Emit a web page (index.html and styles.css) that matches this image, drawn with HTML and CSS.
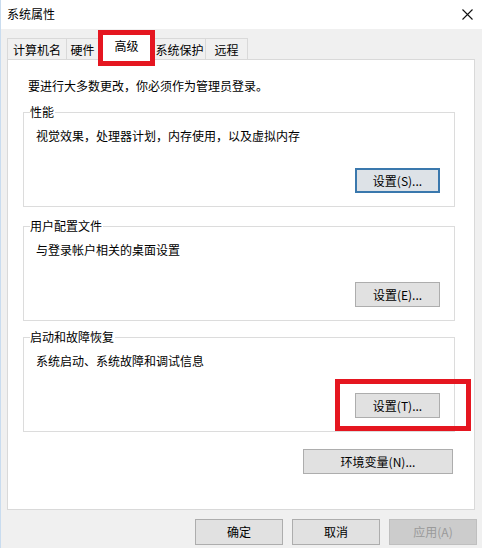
FILE: index.html
```html
<!DOCTYPE html>
<html lang="zh-CN">
<head>
<meta charset="utf-8">
<title>系统属性</title>
<link rel="stylesheet" href="styles.css">
</head>
<body>
<div class="window">
  <div class="titlebar">
    <span class="title">系统属性</span>
    <svg class="close" width="11" height="11" viewBox="0 0 11 11"><path d="M0.5 0.5 L10.5 10.5 M10.5 0.5 L0.5 10.5" stroke="#111" stroke-width="1.1" fill="none"/></svg>
  </div>
  <div class="tabs">
    <div class="tab tab-name">计算机名</div>
    <div class="tab tab-hw">硬件</div>
    <div class="tab tab-adv selected">高级<span class="mark mark-tab"></span></div>
    <div class="tab tab-prot">系统保护</div>
    <div class="tab tab-remote">远程</div>
  </div>
  <div class="panel">
    <div class="notice">要进行大多数更改，你必须作为管理员登录。</div>

    <div class="group">
      <div class="legend">性能</div>
      <div class="desc">视觉效果，处理器计划，内存使用，以及虚拟内存</div>
      <div class="row"><button class="btn btn-set default">设置(S)...</button></div>
    </div>

    <div class="group g2">
      <div class="legend">用户配置文件</div>
      <div class="desc">与登录帐户相关的桌面设置</div>
      <div class="row"><button class="btn btn-set">设置(E)...</button></div>
    </div>

    <div class="group g3">
      <div class="legend">启动和故障恢复</div>
      <div class="desc">系统启动、系统故障和调试信息</div>
      <div class="row"><span class="marked"><button class="btn btn-set">设置(T)...</button><span class="mark mark-btn"></span></span></div>
    </div>

    <div class="row env-row"><button class="btn btn-env">环境变量(N)...</button></div>
  </div>
  <div class="footer">
    <button class="btn btn-foot">确定</button>
    <button class="btn btn-foot">取消</button>
    <button class="btn btn-foot disabled">应用(A)</button>
  </div>
</div>
</body>
</html>
```
FILE: styles.css
```css
* { box-sizing: border-box; }
html, body { margin: 0; padding: 0; }
body {
  width: 482px;
  height: 548px;
  overflow: hidden;
  background: #f0f0f0;
  font-family: "Noto Sans CJK SC", "Microsoft YaHei", sans-serif;
  font-size: 12px;
  line-height: 16px;
  color: #000;
}
.window {
  width: 482px;
  height: 548px;
  border-left: 1px solid #c9dcef;
  background: #f0f0f0;
}
.titlebar {
  height: 29px;
  background: #fff;
  display: flex;
  align-items: center;
  justify-content: space-between;
  padding: 0 9px 0 6px;
  font-size: 12px;
  line-height: 16px;
}
.title { margin-top: -1px; }
.close { display: block; margin-top: -1px; }

.tabs {
  height: 30px;
  display: flex;
  align-items: flex-end;
  padding-left: 6px;
}
.tab {
  height: 21px;
  border: 1px solid #d9d9d9;
  border-bottom: none;
  background: #f0f0f0;
  display: flex;
  align-items: center;
  justify-content: center;
  line-height: 16px;
  margin-left: -1px;
  padding-top: 1px;
}
.tab-name { width: 60px; margin-left: 0; }
.tab-hw { width: 33px; }
.tab-prot { width: 53px; }
.tab-remote { width: 43px; }
.tab.selected {
  position: relative;
  z-index: 1;
  width: 57px;
  height: 27px;
  margin-bottom: -1px;
  background: #fff;
  padding-top: 0;
  padding-bottom: 2px;
  margin-left: -1px;
  margin-right: -1px;
}
.mark {
  position: absolute;
  border: 5px solid #e51620;
  pointer-events: none;
}
.mark-tab { left: -1px; right: -1px; top: -4px; bottom: -6px; }

.panel {
  margin: 0 7px 0 6px;
  height: 451px;
  border: 1px solid #d9d9d9;
  background: #fff;
  padding: 18px 19px 0 15px;
}
.notice {
  line-height: 16px;
  margin-left: 5px;
}
.group {
  margin-top: 18px;
  height: 95px;
  border: 1px solid #dcdcdc;
  padding: 0 14px 0 6px;
}
.g2 { margin-top: 19px; }
.g3 { margin-top: 16px; }
.legend {
  display: block;
  width: fit-content;
  background: #fff;
  line-height: 16px;
  height: 16px;
  margin-top: -9px;
  padding: 0 1px 0 0;
}
.desc {
  line-height: 16px;
  margin: 8px 0 0 6px;
}
.row {
  display: flex;
  justify-content: flex-end;
  margin-top: 24px;
}
.btn {
  font-family: inherit;
  font-size: 12px;
  color: #000;
  background: #e1e1e1;
  border: 1px solid #adadad;
  height: 25px;
  padding: 0;
  margin: 0;
  line-height: 16px;
  display: block;
}
.btn-set { width: 85px; }
.btn.default {
  border: 2px solid #3a78ad;
  background: #dde2e7;
}
.marked { position: relative; display: block; }
.mark-btn { left: -20px; right: -31px; top: -14px; bottom: -13px; }
.env-row { margin-top: 17px; padding-right: 2px; }
.btn-env { width: 150px; }
.footer {
  display: flex;
  justify-content: flex-end;
  gap: 9px;
  margin-top: 9px;
  padding-right: 5px;
}
.btn-foot { width: 88px; height: 26px; }
.btn.disabled {
  background: #cccccc;
  border-color: #bfbfbf;
  color: #9a9a9a;
}
```
